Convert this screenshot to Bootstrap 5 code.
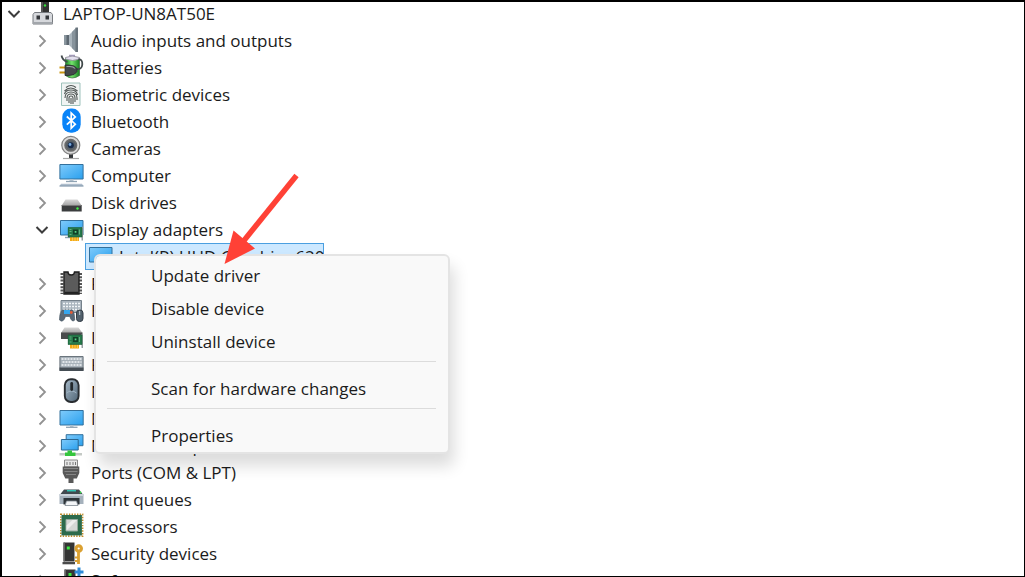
<!DOCTYPE html>
<html lang="en">
<head>
<meta charset="utf-8">
<meta name="viewport" content="width=device-width, initial-scale=1">
<title>Device Manager</title>
<link href="https://cdn.jsdelivr.net/npm/bootstrap@5.3.0/dist/css/bootstrap.min.css" rel="stylesheet">
<style>
  body { font-family: "Open Sans", "Noto Sans", sans-serif; font-size: 17px; line-height: 27px; color: #1b1b1b; background: #fff; }
  .window-frame::after { content: ""; position: absolute; inset: 0; border: solid #000; border-width: 2px 1px 1px 2px; pointer-events: none; z-index: 5; }
  .tree-row { height: 27px; white-space: nowrap; }
  .tree-kids { padding-left: 28px; }
  .twisty { width: 28px; height: 27px; color: #929292; }
  .twisty[aria-expanded="true"] { color: #3c3c3c; }
  .twisty svg { display: block; margin: auto; }
  .device-icon { width: 26px; height: 27px; margin: 0 7px 0 2px; flex: none; }
  .leaf { margin-left: 57px; width: 239px; border: 1px solid #4a9fe0; background: #cce8ff; }
  .leaf .device-icon { margin-right: 6px; margin-left: 1px; }
  .context-menu {
    --bs-dropdown-bg: #f9f9f9; --bs-dropdown-border-color: #e4e4e4; --bs-dropdown-border-width: 2px; --bs-dropdown-border-radius: 6px;
    --bs-dropdown-padding-x: 0; --bs-dropdown-font-size: 17px; --bs-dropdown-link-color: #1b1b1b;
    --bs-dropdown-item-padding-y: 3px; --bs-dropdown-item-padding-x: 55px;
    left: 94px; top: 254px; width: 356px; padding: 3px 0 0; z-index: 2; box-shadow: 4px 12px 16px rgba(0,0,0,.14);
  }
  .context-menu .dropdown-divider { margin: 3px 12px 10px 11px; border-top: 1px solid #dcdcdc; opacity: 1; }
  .pointer-arrow { left: 220px; top: 170px; z-index: 3; pointer-events: none; }
</style>
</head>
<body>
<svg class="position-absolute" width="0" height="0" aria-hidden="true">
  <defs>
    <linearGradient id="gScreen" x1="0" y1="0" x2="1" y2="1"><stop offset="0" stop-color="#7fcbfb"/><stop offset="1" stop-color="#2aa0ee"/></linearGradient>
    <linearGradient id="gGreen" x1="0" y1="0" x2="1" y2="0"><stop offset="0" stop-color="#1d8c2a"/><stop offset=".45" stop-color="#74e36c"/><stop offset="1" stop-color="#168022"/></linearGradient>
    <linearGradient id="gDrive" x1="0" y1="0" x2="0" y2="1"><stop offset="0" stop-color="#d8d8d8"/><stop offset="1" stop-color="#a4a4a4"/></linearGradient>
    <linearGradient id="gMouse" x1="0" y1="0" x2="1" y2="1"><stop offset="0" stop-color="#a9bccb"/><stop offset="1" stop-color="#4f6475"/></linearGradient>
  </defs>
  <symbol id="chev-right" viewBox="0 0 14 14"><path d="M4.500 1.500 10 7l-5.500 5.500" fill="none" stroke="currentColor" stroke-width="1.800"/></symbol>
  <symbol id="chev-down" viewBox="0 0 14 14"><path d="M1.500 4 7 9.500 12.500 4" fill="none" stroke="currentColor" stroke-width="2"/></symbol>
  <symbol id="card-board" viewBox="0 0 16 15"><path d="M14 0h1.500v14H14z" fill="#9a9fa2"/><path d="M2.500 10h9v4.500h-9z" fill="#f4a915"/><path d="M5 10v4.500M7.500 10v4.500M10 10v4.500" stroke="#fbd36b" stroke-width=".7"/><path d="M.5 1h14v9.500H.5z" fill="#26794a" stroke="#1a5c38" stroke-width=".6"/><path d="M5.500 3h5v5h-5z" fill="#123f27"/><path d="M7.200 4.600h1.700v1.700H7.200z" fill="#58d584"/><path d="M2 3h2M2 5h2M2 8h2M12 3v5" stroke="#7cc79a" stroke-width=".7"/></symbol>
</svg>

<main class="window-frame position-relative vh-100 overflow-hidden">
  <ul class="list-unstyled mb-0" aria-label="Devices">
    <li>
      <div class="tree-row d-flex align-items-center">
        <button class="twisty btn p-0 border-0" aria-expanded="true" aria-label="Collapse computer"><svg width="14" height="14"><use href="#chev-down"/></svg></button>
        <svg class="device-icon" viewBox="0 0 26 27"><path d="M11 0h8v13h-8z" fill="#333"/><path d="M11 0h2v13h-2z" fill="#555"/><circle cx="15" cy="5.500" r="1.200" fill="#36e03b"/><path d="M4.500 12.500h16.500l1.500 2v9.500H3v-9.500z" fill="#d6d8dc" stroke="#777b80"/><path d="M3 22h19.500v2H3z" fill="#a2a6ab"/><path d="M6.500 15.500h3.500v4H6.500zM15.500 15.500H19v4h-3.500z" fill="#34373b"/></svg>
        <span>LAPTOP-UN8AT50E</span>
      </div>
      <ul class="list-unstyled tree-kids mb-0">
        <li class="tree-row d-flex align-items-center">
          <button class="twisty btn p-0 border-0" aria-expanded="false" aria-label="Expand Audio inputs and outputs"><svg width="14" height="14"><use href="#chev-right"/></svg></button>
          <svg class="device-icon" viewBox="0 0 26 27"><path d="M6 8h6v10H6z" fill="#5d6871"/><path d="M6 8h2.500v10H6z" fill="#8b979f"/><path d="M11 8 18 1v24l-7-7z" fill="#a9b4bc"/><path d="M14 5l4-4v24l-4-4z" fill="#87939c"/><path d="M17.500.5h2.500v24.500h-2.500z" fill="#69747d"/></svg>
          <span>Audio inputs and outputs</span>
        </li>
        <li class="tree-row d-flex align-items-center">
          <button class="twisty btn p-0 border-0" aria-expanded="false" aria-label="Expand Batteries"><svg width="14" height="14"><use href="#chev-right"/></svg></button>
          <svg class="device-icon" viewBox="0 0 26 27"><path d="M7.500 5v16.500q6.500 5 14 0V5z" fill="url(#gGreen)" stroke="#3b6b3d" stroke-width=".7"/><path d="M7.500 5V3.500Q14 .5 21.500 3.500V5q-7 3-14 0z" fill="#e3e0ee" stroke="#84848e" stroke-width=".8"/><path d="M11 1.500h6" stroke="#a29ab8" stroke-width="1.500"/><path d="M3.500 1.500q1 5 6 6.500M18 15q6 1 6.300-4.500t-4-5" fill="none" stroke="#41494b" stroke-width="1.800"/><path d="M1.500 13.500H8M1.500 18.500H8" stroke="#c99613" stroke-width="2"/><path d="M7 11h4q6 0 8 3.500v3q-2 4-8 4H7z" fill="#43484b" stroke="#24282a" stroke-width=".7"/><path d="M8.500 12.500h3q4 0 5.500 2" fill="none" stroke="#9aa1a5" stroke-width="1.200"/></svg>
          <span>Batteries</span>
        </li>
        <li class="tree-row d-flex align-items-center">
          <button class="twisty btn p-0 border-0" aria-expanded="false" aria-label="Expand Biometric devices"><svg width="14" height="14"><use href="#chev-right"/></svg></button>
          <svg class="device-icon" viewBox="0 0 26 27"><path d="M3.500 2h18.500v22.500H3.500z" fill="#f0f4f3" stroke="#9ec2bb"/><g fill="none" stroke="#4f5654" stroke-width="1.100"><path d="M8 6.500q5-4 10 0M6.500 10q6-6 13 0M6.500 13q1-4 6.500-4t6.500 5M7 17q0-6 6-6t6 6v2M9 20v-3q0-4 4-4t4 4v4M11 22v-5q0-2 2-2t2 2v6M13 17v6"/></g></svg>
          <span>Biometric devices</span>
        </li>
        <li class="tree-row d-flex align-items-center">
          <button class="twisty btn p-0 border-0" aria-expanded="false" aria-label="Expand Bluetooth"><svg width="14" height="14"><use href="#chev-right"/></svg></button>
          <svg class="device-icon" viewBox="0 0 26 27"><rect x="4.300" y=".5" width="18.400" height="24.200" rx="8.500" fill="#0a84f8"/><path d="m8.800 8.500 8.500 7.700-4.100 4V5l4.100 3.900-8.500 7.800" fill="none" stroke="#fff" stroke-width="1.700"/></svg>
          <span>Bluetooth</span>
        </li>
        <li class="tree-row d-flex align-items-center">
          <button class="twisty btn p-0 border-0" aria-expanded="false" aria-label="Expand Cameras"><svg width="14" height="14"><use href="#chev-right"/></svg></button>
          <svg class="device-icon" viewBox="0 0 26 27"><path d="M11 19h4v4h-4z" fill="#34373a"/><path d="M5 23.500h16" stroke="#a6a6a6" stroke-width="1.200"/><circle cx="12.800" cy="10.300" r="9" fill="#d9d9d9" stroke="#818181" stroke-width="1.200"/><circle cx="12.800" cy="10.300" r="5.800" fill="#596067" stroke="#6b6b6b" stroke-width="1.500"/><circle cx="12.800" cy="10.300" r="3" fill="#162a4b"/><circle cx="12" cy="9.500" r="1.400" fill="#77a9e0"/></svg>
          <span>Cameras</span>
        </li>
        <li class="tree-row d-flex align-items-center">
          <button class="twisty btn p-0 border-0" aria-expanded="false" aria-label="Expand Computer"><svg width="14" height="14"><use href="#chev-right"/></svg></button>
          <svg class="device-icon" viewBox="0 0 26 27"><path d="M1.900 2.500h23.200v14.500H1.900z" fill="url(#gScreen)" stroke="#33709c"/><path d="M11.500 17.500h4v1.500h-4z" fill="#b7c5d0"/><path d="M8 19.500h11" stroke="#8fa3b3" stroke-width="1.300"/><path d="M3 21.700h21l1.500 2.500h-24z" fill="#aebdcc"/><path d="M1.500 24h24" stroke="#7f94a8"/></svg>
          <span>Computer</span>
        </li>
        <li class="tree-row d-flex align-items-center">
          <button class="twisty btn p-0 border-0" aria-expanded="false" aria-label="Expand Disk drives"><svg width="14" height="14"><use href="#chev-right"/></svg></button>
          <svg class="device-icon" viewBox="0 0 26 27"><path d="M7.500 10.500h12l4.200 6H3.700z" fill="url(#gDrive)"/><path d="M3.700 16h20v6.500h-20z" fill="#3b3d3e"/><path d="M3.700 16h20v1h-20z" fill="#777"/><circle cx="19.500" cy="19.500" r="1.200" fill="#3df045"/></svg>
          <span>Disk drives</span>
        </li>
        <li>
          <div class="tree-row d-flex align-items-center">
            <button class="twisty btn p-0 border-0" aria-expanded="true" aria-label="Collapse Display adapters"><svg width="14" height="14"><use href="#chev-down"/></svg></button>
            <svg class="device-icon" viewBox="0 0 26 27"><path d="M2.500 4.500h22.500v14.500H2.500z" fill="url(#gScreen)" stroke="#33709c"/><path d="M7 21.500h6" stroke="#8fa3b3" stroke-width="1.400"/><use href="#card-board" x="9.500" y="10.500" width="16" height="15"/></svg>
            <span>Display adapters</span>
          </div>
          <div class="tree-row leaf d-flex align-items-center" aria-selected="true">
            <svg class="device-icon" viewBox="0 0 26 27"><path d="M2.500 4.500h22.500v14.500H2.500z" fill="url(#gScreen)" stroke="#33709c"/></svg>
            <span>Intel(R) UHD Graphics 620</span>
          </div>
        </li>
        <li class="tree-row d-flex align-items-center">
          <button class="twisty btn p-0 border-0" aria-expanded="false" aria-label="Expand Firmware"><svg width="14" height="14"><use href="#chev-right"/></svg></button>
          <svg class="device-icon" viewBox="0 0 26 27"><path d="M4 3v21M22.500 3v21" stroke="#555" stroke-width="3" stroke-dasharray="2 1.300"/><path d="M6 2h4q0 3 3.200 3t3.300-3H21v22H6z" fill="#5b5b5b" stroke="#1e1e1e" stroke-width="1.400"/><path d="M7 22.800h13" stroke="#222" stroke-width="2"/></svg>
          <span>Firmware</span>
        </li>
        <li class="tree-row d-flex align-items-center">
          <button class="twisty btn p-0 border-0" aria-expanded="false" aria-label="Expand Human Interface Devices"><svg width="14" height="14"><use href="#chev-right"/></svg></button>
          <svg class="device-icon" viewBox="0 0 26 27"><path d="M3 3.500h20.500v12H3z" fill="#a9b4be" stroke="#75818b"/><path d="M5 6.500h17M5 9.500h17M5 12.500h17" stroke="#f1f5f8" stroke-width="1.500" stroke-dasharray="2 1"/><path d="M4.500 13h10q2 2 2.300 10-3 3-5-3.500H7.500Q5 26.500 1.500 23q0-8 3-10z" fill="#596979" stroke="#42505d" stroke-width=".6"/><path d="M6 13h6v4H6z" fill="#35a6ef"/><circle cx="13.300" cy="15.500" r="1.400" fill="#e95c35"/><rect x="18.500" y="13" width="6.500" height="11.500" rx="3" fill="#52606c" stroke="#333d46"/><path d="M21.700 14v4" stroke="#bbc8d2"/></svg>
          <span>Human Interface Devices</span>
        </li>
        <li class="tree-row d-flex align-items-center">
          <button class="twisty btn p-0 border-0" aria-expanded="false" aria-label="Expand IDE ATA/ATAPI controllers"><svg width="14" height="14"><use href="#chev-right"/></svg></button>
          <svg class="device-icon" viewBox="0 0 26 27"><path d="M6.500 3.500h14l4 5.500H3z" fill="url(#gDrive)"/><path d="M3 8.500h21.500V15H3z" fill="#4a4c4d"/><use href="#card-board" x="9.500" y="10" width="16" height="15"/></svg>
          <span>IDE ATA/ATAPI controllers</span>
        </li>
        <li class="tree-row d-flex align-items-center">
          <button class="twisty btn p-0 border-0" aria-expanded="false" aria-label="Expand Keyboards"><svg width="14" height="14"><use href="#chev-right"/></svg></button>
          <svg class="device-icon" viewBox="0 0 26 27"><path d="M1.900 5.500h23.200v14H1.900z" fill="#a7b1b9" stroke="#6b757d"/><path d="M3.500 8h20M4.500 11h19M3.500 14h20" stroke="#f2f5f7" stroke-width="1.700" stroke-dasharray="2 1"/><path d="M1.500 16.500h24v3.500h-24z" fill="#454d54"/></svg>
          <span>Keyboards</span>
        </li>
        <li class="tree-row d-flex align-items-center">
          <button class="twisty btn p-0 border-0" aria-expanded="false" aria-label="Expand Mice and other pointing devices"><svg width="14" height="14"><use href="#chev-right"/></svg></button>
          <svg class="device-icon" viewBox="0 0 26 27"><rect x="6.800" y="1.200" width="13.800" height="22.800" rx="6" fill="url(#gMouse)" stroke="#292d31" stroke-width="1.900"/><path d="M8.500 15q5-4 10 0" fill="none" stroke="#9fb2c1"/><rect x="12.300" y="4" width="2.800" height="9" rx="1.400" fill="#23282c"/></svg>
          <span>Mice and other pointing devices</span>
        </li>
        <li class="tree-row d-flex align-items-center">
          <button class="twisty btn p-0 border-0" aria-expanded="false" aria-label="Expand Monitors"><svg width="14" height="14"><use href="#chev-right"/></svg></button>
          <svg class="device-icon" viewBox="0 0 26 27"><path d="M2 5.500h23.200v14.500H2z" fill="url(#gScreen)" stroke="#33709c"/><path d="M12 20.500h3.500V22H12z" fill="#b7c5d0"/><path d="M8 22.300h11.500" stroke="#8fa3b3" stroke-width="1.300"/></svg>
          <span>Monitors</span>
        </li>
        <li class="tree-row d-flex align-items-center">
          <button class="twisty btn p-0 border-0" aria-expanded="false" aria-label="Expand Network adapters"><svg width="14" height="14"><use href="#chev-right"/></svg></button>
          <svg class="device-icon" viewBox="0 0 26 27"><path d="M8.200 2.700h16.800v11H8.200z" fill="url(#gScreen)" stroke="#33709c"/><path d="M3.400 7.500h16.800V18H3.400z" fill="url(#gScreen)" stroke="#2b6792"/><path d="M1.500 21h22.500v2.500H1.500z" fill="#c4c9c5"/><path d="M9.500 18.500h4.500v2h3.500v3.500H7v-3.500h2.500z" fill="#34c53d"/></svg>
          <span>Network adapters</span>
        </li>
        <li class="tree-row d-flex align-items-center">
          <button class="twisty btn p-0 border-0" aria-expanded="false" aria-label="Expand Ports (COM &amp; LPT)"><svg width="14" height="14"><use href="#chev-right"/></svg></button>
          <svg class="device-icon" viewBox="0 0 26 27"><path d="M6.500 1h13v7h-13z" fill="#e6e6e6" stroke="#898989"/><path d="M9 3v3M12 3v3M15 3v3M17.500 3v3" stroke="#777"/><path d="M4.700 7.500h16.600V14l-2.500 5.500h-3.300V24h-5v-4.500H7.300L4.700 14z" fill="#595959"/><path d="M6 9.500h14M6.500 12.500h13M8 15.500h10" stroke="#858585"/></svg>
          <span>Ports (COM &amp; LPT)</span>
        </li>
        <li class="tree-row d-flex align-items-center">
          <button class="twisty btn p-0 border-0" aria-expanded="false" aria-label="Expand Print queues"><svg width="14" height="14"><use href="#chev-right"/></svg></button>
          <svg class="device-icon" viewBox="0 0 26 27"><path d="M6 3.500h15l3.500 4.500h-22z" fill="#41494f"/><path d="M9 4.700h9" stroke="#2fc4b4" stroke-width="1.500"/><path d="M1.500 8h24v10h-24z" fill="#a5b1bc"/><path d="M1.500 8h24v2h-24z" fill="#cbd3da"/><path d="M5.500 12h16v6.500h-16z" fill="#2e3439"/><path d="M8.500 15h10l1.500 4.500H7z" fill="#f3f5f7" stroke="#7d8891" stroke-width=".8"/><circle cx="22.500" cy="6.500" r=".9" fill="#38df4c"/></svg>
          <span>Print queues</span>
        </li>
        <li class="tree-row d-flex align-items-center">
          <button class="twisty btn p-0 border-0" aria-expanded="false" aria-label="Expand Processors"><svg width="14" height="14"><use href="#chev-right"/></svg></button>
          <svg class="device-icon" viewBox="0 0 26 27"><path d="M2.800 1.300h21.800v21.800H2.800z" fill="none" stroke="#bd8b2a" stroke-width="1.600" stroke-dasharray="1.400 1.300"/><path d="M3.500 2h20.400v20.400H3.500z" fill="#2c6b4c"/><path d="M8 6.500h11.500V18H8z" fill="#d4d7d5" stroke="#94aa9d"/><path d="M8.500 17.500v-5l6-5.500H19z" fill="#ededed"/></svg>
          <span>Processors</span>
        </li>
        <li class="tree-row d-flex align-items-center">
          <button class="twisty btn p-0 border-0" aria-expanded="false" aria-label="Expand Security devices"><svg width="14" height="14"><use href="#chev-right"/></svg></button>
          <svg class="device-icon" viewBox="0 0 26 27"><path d="M5.500 2.500h11v19h-11z" fill="#353535"/><path d="M5.500 2.500h1.500v19H5.500z" fill="#666"/><path d="M4.500 22h12.500v2.300H4.500z" fill="#4a4a4a"/><path d="M8.800 6.500h3v3h-3z" fill="#3bea42"/><path d="M20.500 12v12" stroke="#dba132" stroke-width="2.800"/><path d="M20 17.500h-3M20 21h-3" stroke="#dba132" stroke-width="1.800"/><circle cx="20.700" cy="8.500" r="2.700" fill="#fff" stroke="#dba132" stroke-width="3.200"/></svg>
          <span>Security devices</span>
        </li>
        <li class="tree-row d-flex align-items-center">
          <button class="twisty btn p-0 border-0" aria-expanded="false" aria-label="Expand Software components"><svg width="14" height="14"><use href="#chev-right"/></svg></button>
          <svg class="device-icon" viewBox="0 0 26 27"><path d="M6.500 2.500h11v19h-11z" fill="#353535"/><path d="M6.500 2.500H8v19H6.500z" fill="#666"/><path d="M10.500 6h3v3h-3z" fill="#3bea42"/><path d="M21 .5v9M16.500 5h9" stroke="#2f8bd8" stroke-width="3"/></svg>
          <span>Software components</span>
        </li>
      </ul>
    </li>
  </ul>

  <div class="context-menu dropdown-menu show" role="menu">
    <button class="dropdown-item" role="menuitem">Update driver</button>
    <button class="dropdown-item" role="menuitem">Disable device</button>
    <button class="dropdown-item" role="menuitem">Uninstall device</button>
    <hr class="dropdown-divider">
    <button class="dropdown-item" role="menuitem">Scan for hardware changes</button>
    <hr class="dropdown-divider">
    <button class="dropdown-item" role="menuitem">Properties</button>
  </div>

  <svg class="pointer-arrow position-absolute" width="80" height="96" aria-hidden="true"><path d="M76.500 5.500 22 73" stroke="#ff4136" stroke-width="5.500"/><path d="M4.500 94 13.500 60.500 35 78.500z" fill="#ff4136"/></svg>
</main>
<script src="https://cdn.jsdelivr.net/npm/bootstrap@5.3.0/dist/js/bootstrap.bundle.min.js"></script>
</body>
</html>
